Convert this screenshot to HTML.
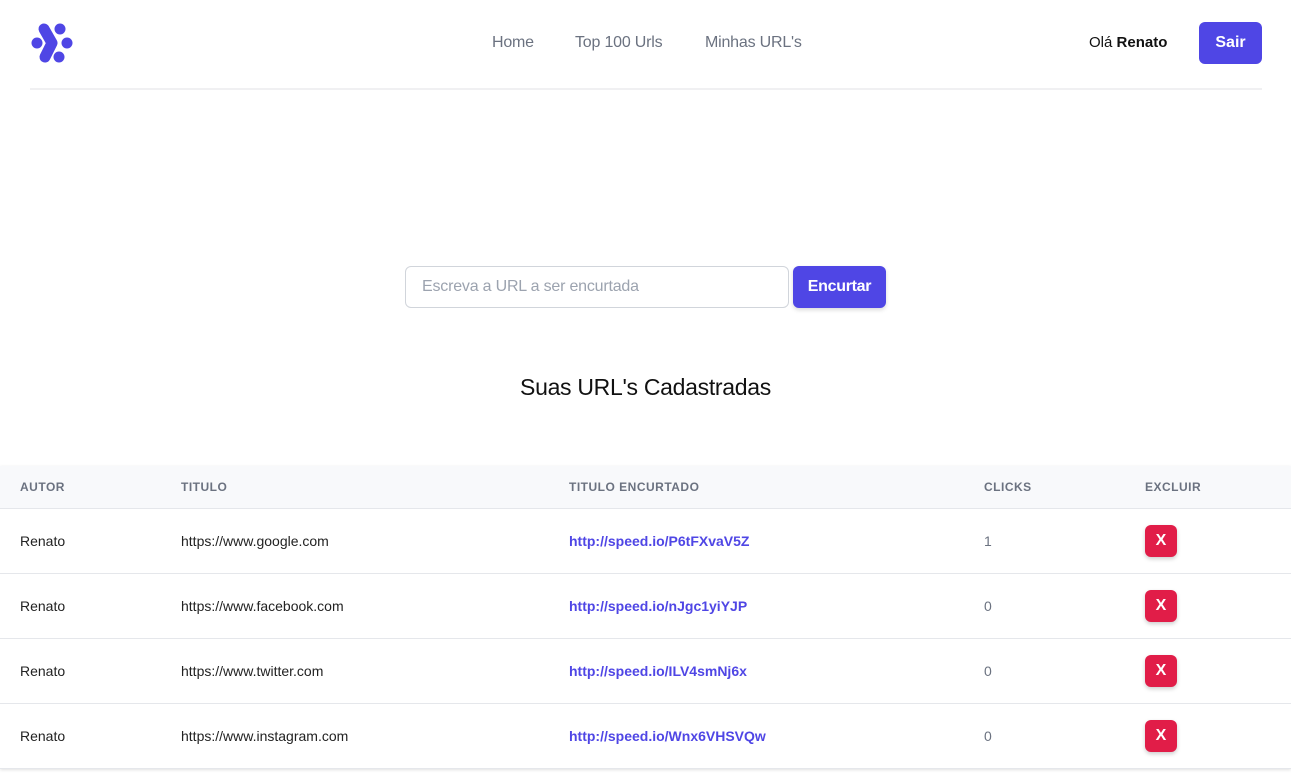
<!DOCTYPE html>
<html><head><meta charset="utf-8"><style>
body{margin:0;background:#fff;font-family:"Liberation Sans",sans-serif;width:1291px;height:779px;overflow:hidden;position:relative}
.hdr{position:absolute;left:30px;right:29px;top:0;height:88px;border-bottom:2px solid #f0f0f2}
.nav a{position:absolute;top:34px;font-size:16px;color:#6b7280;text-decoration:none;font-weight:500;letter-spacing:-0.2px}
.ola{position:absolute;left:1089px;top:34px;font-size:15px;color:#111}
.sair{position:absolute;left:1199px;top:22px;width:63px;height:42px;background:#4f46e5;color:#fff;border-radius:6px;font-weight:bold;font-size:16px;text-align:center;line-height:42px}
.inp{position:absolute;left:405px;top:266px;width:382px;height:40px;border:1px solid #d1d5db;border-radius:6px;box-sizing:content-box}
.inp span{position:absolute;left:16px;top:11px;color:#9ca3af;font-size:16px;letter-spacing:-0.2px}
.btn{position:absolute;left:793px;top:266px;width:93px;height:42px;background:#4f46e5;color:#fff;font-weight:bold;border-radius:6px;font-size:16px;text-align:center;line-height:42px;box-shadow:0 2px 4px rgba(0,0,0,.15);letter-spacing:-0.3px}
h2{position:absolute;left:0;width:1291px;text-align:center;top:374px;margin:0;font-weight:normal;font-size:23px;letter-spacing:-0.3px;color:#111}
table{position:absolute;left:0;top:466px;width:1291px;border-collapse:collapse;box-shadow:0 1px 3px rgba(0,0,0,.12)}
th{background:#f8f9fb;height:42px;text-align:left;font-size:12px;letter-spacing:.5px;color:#6b7280;font-weight:bold;border-bottom:1px solid #e5e7eb;padding:0 0 0 20px}
td{height:64px;border-bottom:1px solid #e5e7eb;font-size:14px;color:#222;padding:0 0 0 20px}
td.l{color:#4f46e5;font-weight:bold}
td.c{color:#6b7280}
.x{display:inline-block;width:32px;height:32px;background:#e11d48;color:#fff;font-weight:bold;border-radius:6px;text-align:center;line-height:32px;font-size:16px;box-shadow:0 2px 4px rgba(0,0,0,.2);vertical-align:middle}
</style></head><body>
<div class="hdr"></div>
<svg style="position:absolute;left:28px;top:20px" width="48" height="46" viewBox="28 20 48 46">
<g fill="#4f46e5"><circle cx="37" cy="43" r="5.5"/><circle cx="60" cy="29" r="5.5"/><circle cx="67" cy="43" r="5.5"/><circle cx="59" cy="57" r="5.5"/></g>
<path d="M44 29 L52 43 L45 57" stroke="#4f46e5" stroke-width="11" fill="none" stroke-linecap="round" stroke-linejoin="round"/>
</svg>
<div class="nav"><a style="left:492px">Home</a><a style="left:575px">Top 100 Urls</a><a style="left:705px">Minhas URL's</a></div>
<div class="ola">Olá <b>Renato</b></div>
<div class="sair">Sair</div>
<div class="inp"><span>Escreva a URL a ser encurtada</span></div>
<div class="btn">Encurtar</div>
<h2>Suas URL's Cadastradas</h2>
<table>
<tr><th style="width:141px">AUTOR</th><th style="width:368px">TITULO</th><th style="width:395px">TITULO ENCURTADO</th><th style="width:141px">CLICKS</th><th>EXCLUIR</th></tr>
<tr><td>Renato</td><td>https://www.google.com</td><td class="l">http://speed.io/P6tFXvaV5Z</td><td class="c">1</td><td><span class="x">X</span></td></tr>
<tr><td>Renato</td><td>https://www.facebook.com</td><td class="l">http://speed.io/nJgc1yiYJP</td><td class="c">0</td><td><span class="x">X</span></td></tr>
<tr><td>Renato</td><td>https://www.twitter.com</td><td class="l">http://speed.io/ILV4smNj6x</td><td class="c">0</td><td><span class="x">X</span></td></tr>
<tr><td>Renato</td><td>https://www.instagram.com</td><td class="l">http://speed.io/Wnx6VHSVQw</td><td class="c">0</td><td><span class="x">X</span></td></tr>
</table>
</body></html>
